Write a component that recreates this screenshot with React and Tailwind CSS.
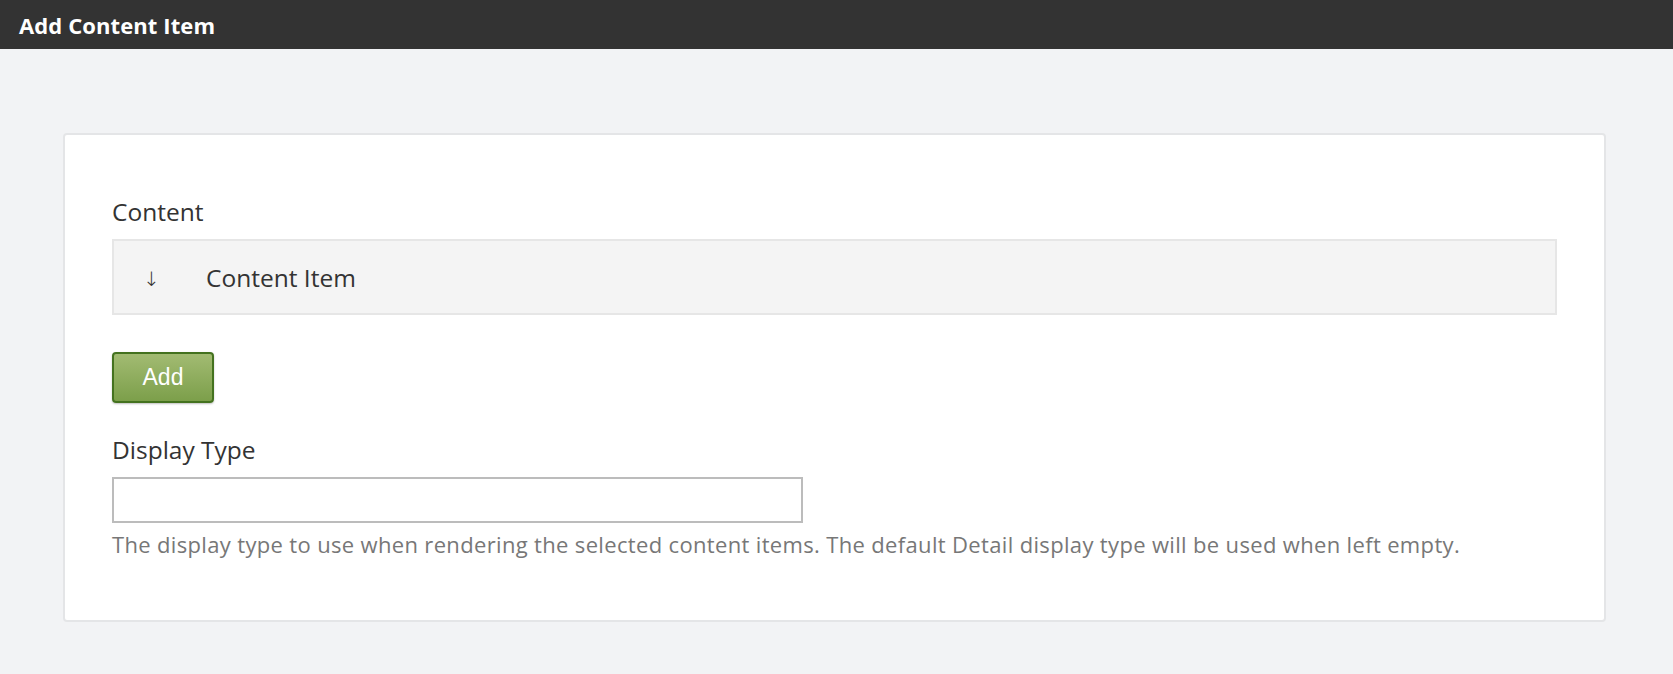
import React from 'react';

const App = () => {
  return (
    <div className="min-h-screen bg-[#f2f3f5] font-['Open_Sans',sans-serif]">
      {/* TOP BAR */}
      <div className="h-[49px] bg-[#333333] flex items-center pl-[19px]">
        <h1 className="text-white font-bold text-[22px] leading-none tracking-[0.1px]">
          Add Content Item
        </h1>
      </div>

      <div className="pt-[84px] pl-[63px] pr-[67px] pb-[52px]">
        <div className="bg-white border-2 border-[#e4e5e7] rounded-[4px] pl-[47px] pr-[47px] pt-[60px] pb-[60px]">
          {/* Content */}
          <label className="block text-[24.5px] leading-[33px] text-[#333333]">Content</label>
          <div className="mt-[11px] h-[76px] bg-[#f4f4f4] border-2 border-[#e6e6e6] flex items-center pt-[3px] text-[24.5px] text-[#333333]">
            <span className="w-[92px] pl-[29px] font-['DejaVu_Sans',sans-serif] text-[20px] font-light">↓</span>
            <span>Content Item</span>
          </div>

          <button className="mt-[37px] w-[102px] h-[51px] rounded-[4px] border-2 border-[#44721f] bg-gradient-to-b from-[#a2bb72] to-[#7c9f4a] text-white font-['Liberation_Sans',Arial,sans-serif] text-[23px] shadow-[0_1px_2px_rgba(0,0,0,0.25)]">
            Add
          </button>

          {/* Display Type */}
          <label className="block mt-[30px] text-[24.5px] leading-[33px] text-[#333333]">Display Type</label>
          <input
            type="text"
            className="block mt-[11px] w-[691px] h-[46px] border-2 border-[#bcbcbc] bg-white outline-none px-3"
          />
          <p className="mt-[6px] text-[22px] leading-[31px] tracking-[0.34px] text-[#777777]">
            The display type to use when rendering the selected content items. The default Detail display type will be used when left empty.
          </p>
        </div>
      </div>
    </div>
  );
};

export default App;
